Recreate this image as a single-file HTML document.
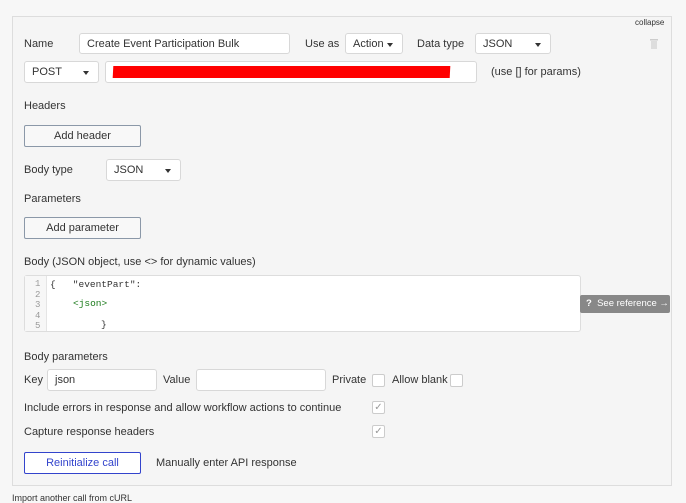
<!DOCTYPE html><html><head><style>
body{margin:0;width:686px;height:500px;background:#f7f7f7;font-family:"Liberation Sans",sans-serif;font-size:11px;color:#333;position:relative;overflow:hidden}
.a{position:absolute;white-space:nowrap}
.panel{position:absolute;left:12px;top:16px;width:658px;height:468px;border:1px solid #ddd;background:#f5f5f5}
.in{position:absolute;background:#fff;border:1px solid #d8d8d8;border-radius:3px;box-sizing:border-box;padding-left:7px;line-height:20px}
.sel::after{content:"";position:absolute;right:9px;top:9px;border-left:3.5px solid transparent;border-right:3.5px solid transparent;border-top:4px solid #333}
.btn{position:absolute;background:#f8f8f8;border:1px solid #8b98a8;border-radius:2px;box-sizing:border-box;text-align:center;line-height:21px}
.cb{position:absolute;width:13px;height:13px;background:#fff;border:1px solid #ccc;border-radius:2px;box-sizing:border-box}
.ck{color:#999;font-size:10px;text-align:center;line-height:12px}
.mono{font-family:"Liberation Mono",monospace;font-size:9.5px}
</style></head><body>
<div class="panel"></div>
<div class="a" style="left:635px;top:18px;font-size:8px">collapse</div>
<div class="a" style="left:24px;top:38px">Name</div>
<div class="in" style="left:79px;top:33px;width:211px;height:21px">Create Event Participation Bulk</div>
<div class="a" style="left:305px;top:38px">Use as</div>
<div class="in sel" style="left:345px;top:33px;width:58px;height:21px">Action</div>
<div class="a" style="left:417px;top:38px">Data type</div>
<div class="in sel" style="left:475px;top:33px;width:76px;height:21px">JSON</div>
<svg class="a" style="left:649px;top:38px" width="10" height="11"><rect x="1" y="1" width="8" height="1.5" fill="#ccc"/><rect x="2" y="3" width="6" height="8" fill="#ddd"/></svg>
<div class="in sel" style="left:24px;top:61px;width:75px;height:22px;line-height:21px">POST</div>
<div class="in" style="left:105px;top:61px;width:372px;height:22px"></div>
<div class="a" style="left:113px;top:66px;width:337px;height:12px;background:#ff0000;transform:skewX(-3deg)"></div>
<div class="a" style="left:491px;top:66px">(use [] for params)</div>
<div class="a" style="left:24px;top:100px">Headers</div>
<div class="btn" style="left:24px;top:125px;width:117px;height:22px">Add header</div>
<div class="a" style="left:24px;top:164px">Body type</div>
<div class="in sel" style="left:106px;top:159px;width:75px;height:22px;line-height:21px">JSON</div>
<div class="a" style="left:24px;top:193px">Parameters</div>
<div class="btn" style="left:24px;top:217px;width:117px;height:22px">Add parameter</div>
<div class="a" style="left:24px;top:256px">Body (JSON object, use &lt;&gt; for dynamic values)</div>
<div class="a" style="left:24px;top:275px;width:557px;height:57px;background:#fff;border:1px solid #ddd;border-radius:3px;box-sizing:border-box"></div>
<div class="a" style="left:25px;top:276px;width:21px;height:55px;background:#f7f7f7;border-right:1px solid #e5e5e5"></div>
<div class="a mono" style="left:35px;top:279px;color:#999;line-height:10.5px;font-size:9px">1<br>2<br>3<br>4<br>5</div>
<div class="a mono" style="left:50px;top:279px">{&nbsp;&nbsp;&nbsp;"eventPart":</div>
<div class="a mono" style="left:73px;top:298px;color:#1a7a1a">&lt;json&gt;</div>
<div class="a mono" style="left:101px;top:319px">}</div>
<div class="a" style="left:580px;top:295px;width:90px;height:18px;background:#888;border-radius:2px;color:#fff;font-size:9.5px;line-height:18px;text-indent:6px"><b>?</b>&nbsp; See reference →</div>
<div class="a" style="left:24px;top:351px">Body parameters</div>
<div class="a" style="left:24px;top:374px">Key</div>
<div class="in" style="left:47px;top:369px;width:110px;height:22px;line-height:21px">json</div>
<div class="a" style="left:163px;top:374px">Value</div>
<div class="in" style="left:196px;top:369px;width:130px;height:22px"></div>
<div class="a" style="left:332px;top:374px">Private</div>
<div class="cb" style="left:372px;top:374px"></div>
<div class="a" style="left:392px;top:374px">Allow blank</div>
<div class="cb" style="left:450px;top:374px"></div>
<div class="a" style="left:24px;top:402px">Include errors in response and allow workflow actions to continue</div>
<div class="cb ck" style="left:372px;top:401px">✓</div>
<div class="a" style="left:24px;top:426px">Capture response headers</div>
<div class="cb ck" style="left:372px;top:425px">✓</div>
<div class="btn" style="left:24px;top:452px;width:117px;height:22px;border-color:#3344cc;color:#3344cc;background:#fff">Reinitialize call</div>
<div class="a" style="left:156px;top:457px">Manually enter API response</div>
<div class="a" style="left:12px;top:493px;font-size:9px">Import another call from cURL</div>
</body></html>
